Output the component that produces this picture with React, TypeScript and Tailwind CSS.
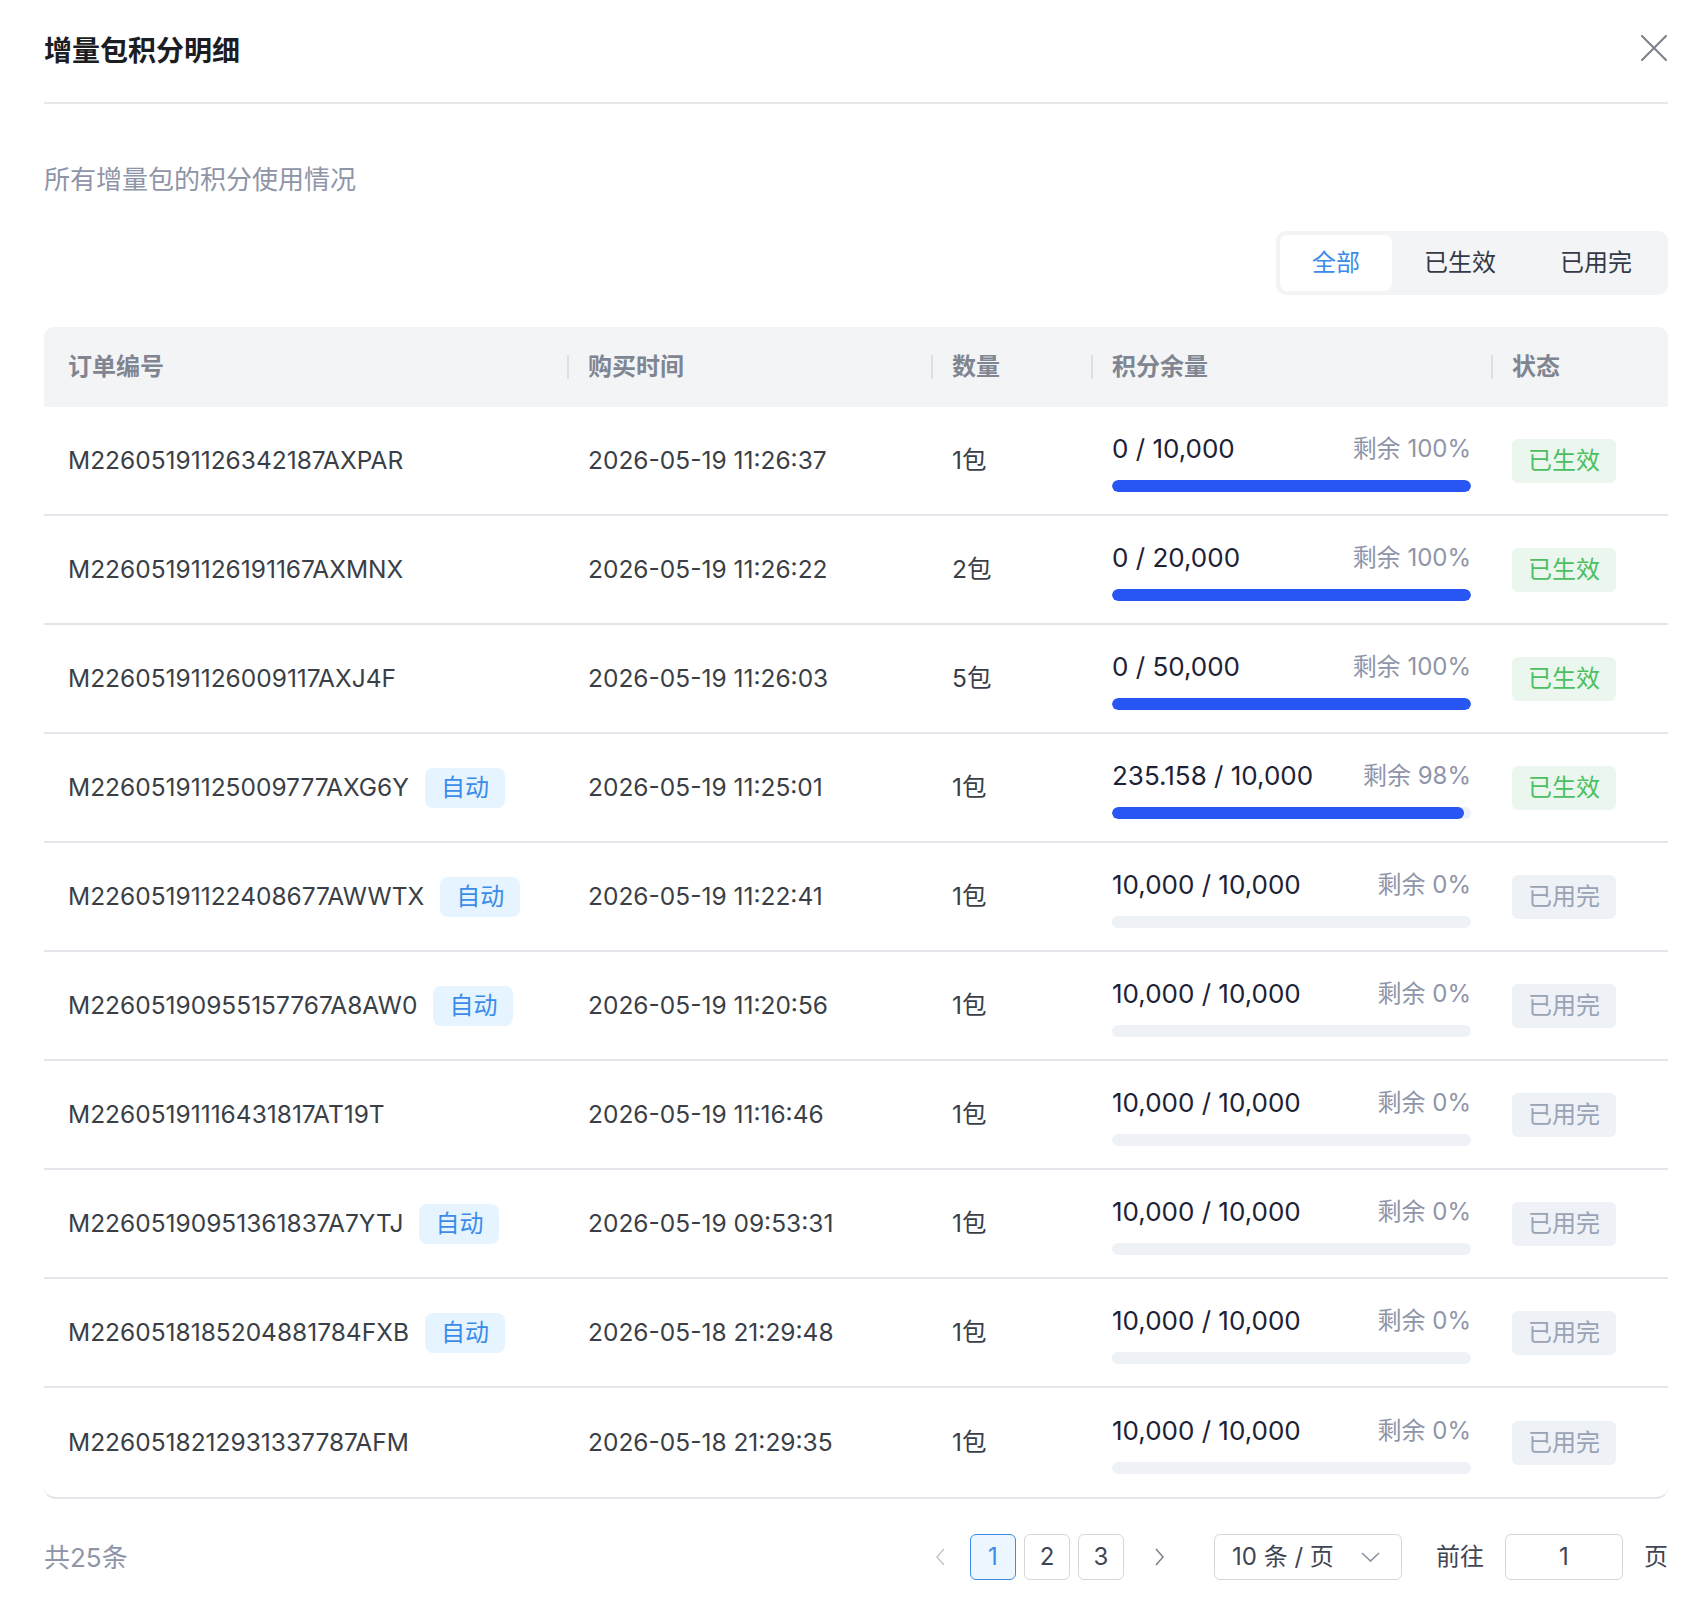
import React from "react";

interface Order {
  id: string;
  auto?: boolean;
  time: string;
  qty: string;
  used: string;
  total: string;
  left: number;
}

const orders: Order[] = [
  { id: "M22605191126342187AXPAR", time: "2026-05-19 11:26:37", qty: "1包", used: "0", total: "10,000", left: 100 },
  { id: "M22605191126191167AXMNX", time: "2026-05-19 11:26:22", qty: "2包", used: "0", total: "20,000", left: 100 },
  { id: "M22605191126009117AXJ4F", time: "2026-05-19 11:26:03", qty: "5包", used: "0", total: "50,000", left: 100 },
  { id: "M22605191125009777AXG6Y", auto: true, time: "2026-05-19 11:25:01", qty: "1包", used: "235.158", total: "10,000", left: 98 },
  { id: "M22605191122408677AWWTX", auto: true, time: "2026-05-19 11:22:41", qty: "1包", used: "10,000", total: "10,000", left: 0 },
  { id: "M22605190955157767A8AW0", auto: true, time: "2026-05-19 11:20:56", qty: "1包", used: "10,000", total: "10,000", left: 0 },
  { id: "M22605191116431817AT19T", time: "2026-05-19 11:16:46", qty: "1包", used: "10,000", total: "10,000", left: 0 },
  { id: "M22605190951361837A7YTJ", auto: true, time: "2026-05-19 09:53:31", qty: "1包", used: "10,000", total: "10,000", left: 0 },
  { id: "M2260518185204881784FXB", auto: true, time: "2026-05-18 21:29:48", qty: "1包", used: "10,000", total: "10,000", left: 0 },
  { id: "M2260518212931337787AFM", time: "2026-05-18 21:29:35", qty: "1包", used: "10,000", total: "10,000", left: 0 },
];

const Sep = () => <span className="ml-[3px] mr-[19px] w-[2px] h-6 bg-[#dcdfe4]" />;

export default function App() {
  return (
    <div className="min-h-[1614px] bg-white pl-[44px] pr-[34px] font-['Inter','Noto_Sans_CJK_SC',sans-serif]">
      {/* header */}
      <div className="flex h-[104px] items-center justify-between border-b-2 border-[#e6e7eb]">
        <h1 className="text-[28px] font-bold text-[#1b1d22] leading-none">增量包积分明细</h1>
        <svg width="26" height="26" viewBox="0 0 26 26" className="mr-[1px] -mt-[6px]">
          <path d="M1 1 L25 25 M25 1 L1 25" stroke="#7b808a" strokeWidth="2" strokeLinecap="round" />
        </svg>
      </div>

      <p className="mt-[58px] text-[26px] leading-[36px] text-[#8f95a8]">所有增量包的积分使用情况</p>

      <div className="mt-[33px] flex justify-end">
        <div className="flex p-1 bg-[#f3f4f6] rounded-[10px]">
          {["全部", "已生效", "已用完"].map((t, i) => (
            <button
              key={t}
              className={`h-14 px-8 rounded-lg text-[24px] ${
                i === 0 ? "bg-white text-[#3b8ce8]" : "text-[#333a45]"
              }`}
            >
              {t}
            </button>
          ))}
        </div>
      </div>

      {/* table */}
      <div className="mt-[32px]">
        <div className="flex h-20 items-center bg-[#f3f4f6] rounded-t-[10px] text-[24px] font-semibold text-[#7f8591]">
          <div className="w-[520px] pl-6">订单编号</div>
          <div className="w-[364px] flex items-center"><Sep />购买时间</div>
          <div className="w-[160px] flex items-center"><Sep />数量</div>
          <div className="w-[400px] flex items-center"><Sep />积分余量</div>
          <div className="flex-1 flex items-center"><Sep />状态</div>
        </div>

        <div className="border-b-2 border-[#e4e5ea] rounded-b-[12px] overflow-hidden">
          {orders.map((o, i) => {
            const active = o.left > 0;
            return (
              <div
                key={o.id}
                className={`flex h-[109px] items-center text-[24.5px] text-[#3a3f47] ${
                  i < orders.length - 1 ? "border-b-2 border-[#e4e5ea]" : "h-[107px]"
                }`}
              >
                <div className="w-[520px] pl-6 flex items-center">
                  <span>{o.id}</span>
                  {o.auto && (
                    <span className="ml-4 h-10 px-4 flex items-center rounded-lg bg-[#e6f4ff] text-[#3b8ce8] text-[24px]">自动</span>
                  )}
                </div>
                <div className="w-[364px] pl-6">{o.time}</div>
                <div className="w-[160px] pl-6">{o.qty}</div>
                <div className="w-[400px] pl-6 pt-[3px]">
                  <div className="w-[359px]">
                    <div className="flex items-center justify-between leading-[32px]">
                      <span className="text-[26px] text-[#1c2236]">
                        {o.used} / {o.total}
                      </span>
                      <span className="text-[24px] text-[#8f95a8]">剩余 {o.left}%</span>
                    </div>
                    <div className="mt-[15px] h-3 rounded-full bg-[#eef1f6] overflow-hidden">
                      {o.left > 0 && (
                        <div className="h-3 rounded-full bg-[#2856f5]" style={{ width: `${o.left}%` }} />
                      )}
                    </div>
                  </div>
                </div>
                <div className="flex-1 pl-6">
                  <span
                    className={`inline-flex h-11 px-4 items-center rounded-md text-[24px] ${
                      active ? "bg-[#ebf7ee] text-[#4cbf62]" : "bg-[#eef1f6] text-[#9aa3b5]"
                    }`}
                  >
                    {active ? "已生效" : "已用完"}
                  </span>
                </div>
              </div>
            );
          })}
        </div>
      </div>

      {/* footer */}
      <div className="mt-[35px] flex h-[46px] items-center justify-between text-[24px]">
        <span className="text-[26px] text-[#8f95a8]">共25条</span>
        <div className="flex items-center text-[#3f4652]">
          <svg width="12" height="18" viewBox="0 0 12 18">
            <path d="M10 1 L3 9 L10 17" fill="none" stroke="#c3c7cf" strokeWidth="1.6" />
          </svg>
          <div className="ml-6 flex gap-2">
            <button className="w-[46px] h-[46px] rounded-md border-[1.5px] border-[#3b8ce8] bg-[#ebf6ff] text-[#3b8ce8]">1</button>
            <button className="w-[46px] h-[46px] rounded-md border-[1.5px] border-[#d3d6dc]">2</button>
            <button className="w-[46px] h-[46px] rounded-md border-[1.5px] border-[#d3d6dc]">3</button>
          </div>
          <svg width="12" height="18" viewBox="0 0 12 18" className="ml-[30px]">
            <path d="M2 1 L9 9 L2 17" fill="none" stroke="#7d838f" strokeWidth="1.6" />
          </svg>
          <div className="ml-12 w-[188px] h-[46px] rounded-md border-[1.5px] border-[#d3d6dc] flex items-center justify-between pl-[17px] pr-[21px]">
            <span>10 条 / 页</span>
            <svg width="19" height="10" viewBox="0 0 19 10">
              <path d="M1 1 L9.5 9 L18 1" fill="none" stroke="#8a909c" strokeWidth="1.6" />
            </svg>
          </div>
          <span className="ml-[34px]">前往</span>
          <div className="ml-[21px] w-[118px] h-[46px] rounded-md border-[1.5px] border-[#d3d6dc] flex items-center justify-center">1</div>
          <span className="ml-[21px]">页</span>
        </div>
      </div>
    </div>
  );
}
